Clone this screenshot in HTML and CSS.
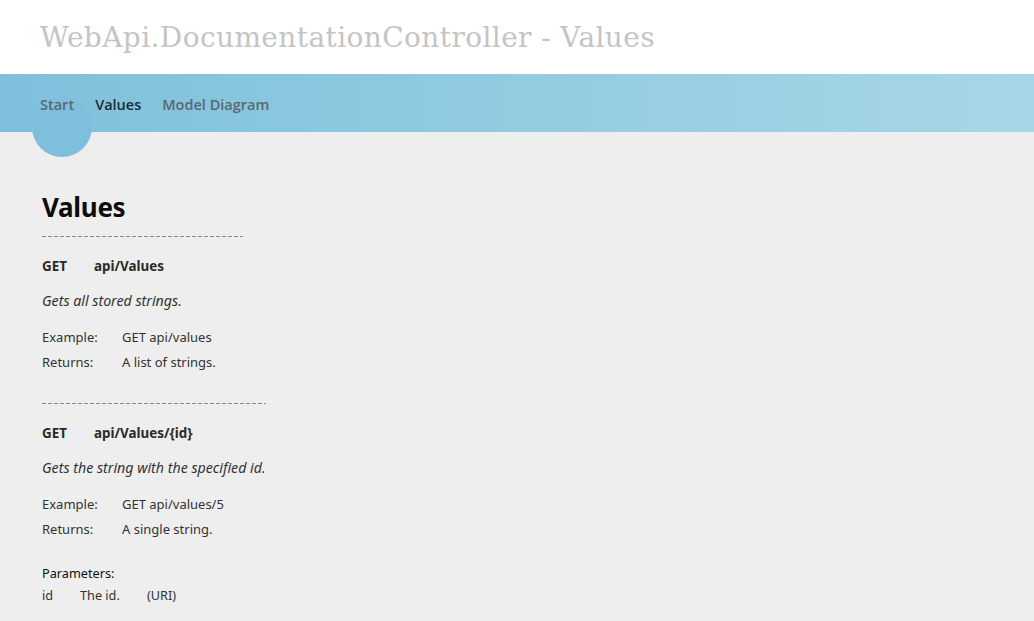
FILE: index.html
```
<!DOCTYPE html>
<html>
<head>
<meta charset="utf-8">
<title>WebApi.DocumentationController - Values</title>
<link rel="stylesheet" href="styles.css">
</head>
<body>
<header class="top">
  <h1 class="site-title">WebApi.DocumentationController - Values</h1>
</header>
<nav class="nav">
  <a class="nav-item">Start</a>
  <a class="nav-item active">Values</a>
  <a class="nav-item">Model Diagram</a>
  <span class="nav-bubble"></span>
</nav>
<main class="content">
  <h2 class="page-title">Values</h2>
  <section class="endpoint">
    <div class="sep sep-a"></div>
    <div class="route"><span class="verb">GET</span><span class="path">api/Values</span></div>
    <p class="desc">Gets all stored strings.</p>
    <div class="kv"><span class="k">Example:</span><span class="v">GET api/values</span></div>
    <div class="kv"><span class="k">Returns:</span><span class="v">A list of strings.</span></div>
  </section>
  <section class="endpoint second">
    <div class="sep sep-b"></div>
    <div class="route"><span class="verb">GET</span><span class="path">api/Values/{id}</span></div>
    <p class="desc">Gets the string with the specified id.</p>
    <div class="kv"><span class="k">Example:</span><span class="v">GET api/values/5</span></div>
    <div class="kv"><span class="k">Returns:</span><span class="v">A single string.</span></div>
    <div class="params">
      <div class="params-title">Parameters:</div>
      <div class="param"><span class="p-name">id</span><span class="p-desc">The id.</span><span class="p-src">(URI)</span></div>
    </div>
  </section>
</main>
</body>
</html>
```
FILE: styles.css
```
html, body { margin: 0; padding: 0; }
body {
  background: #eeeeee;
  font-family: "Noto Sans", "Open Sans", sans-serif;
  color: #333;
  width: 1034px;
  height: 621px;
  overflow: hidden;
}
.top {
  background: #fff;
  height: 74px;
  box-sizing: border-box;
  padding: 21px 0 0 40px;
}
.site-title {
  margin: 0;
  font-family: "DejaVu Serif", serif;
  font-weight: normal;
  font-size: 28px;
  line-height: 34px;
  color: #c4c4c4;
  letter-spacing: 0.4px;
}
.nav {
  position: relative;
  height: 58px;
  background: linear-gradient(to right, #7ec0dc 0%, #93cbe1 50%, #a7d6e7 100%);
  display: flex;
  align-items: center;
  padding-left: 40px;
  gap: 21px;
  box-sizing: border-box;
  padding-top: 2px;
}
.nav-item {
  font-family: "Open Sans", sans-serif;
  font-weight: 600;
  font-size: 14.5px;
  color: #5a6770;
  position: relative;
  z-index: 1;
}
.nav-item.active { color: #1f2a33; }
.nav-bubble {
  position: absolute;
  left: 32px;
  top: 23px;
  width: 60px;
  height: 60px;
  border-radius: 50%;
  background: #7ec0dc;
}
.content {
  padding: 57px 0 0 42px;
}
.page-title {
  margin: 0;
  font-family: "Noto Sans", sans-serif;
  font-weight: bold;
  font-size: 26px;
  line-height: 36px;
  color: #0d0d0d;
  letter-spacing: -0.3px;
}
.sep {
  height: 1px;
  background: repeating-linear-gradient(to right, #8a8a8a 0 4px, transparent 4px 6px);
}
.sep-a { width: 201px; margin-top: 11px; }
.sep-b { width: 224px; }
.second { margin-top: 32px; }
.route {
  display: flex;
  font-weight: bold;
  font-size: 13.4px;
  color: #2a2a2a;
  margin-top: 20px;
  line-height: 18px;
}
.verb { width: 52px; }
.desc {
  margin: 17px 0 0 0;
  font-style: italic;
  font-size: 14.2px;
  line-height: 18px;
  color: #333;
}
.kv {
  display: flex;
  font-size: 13px;
  line-height: 18px;
  color: #333;
}
.desc + .kv { margin-top: 18px; }
.kv + .kv { margin-top: 7px; }
.k { width: 80px; }
.params { margin-top: 26px; font-size: 12.7px; line-height: 18px; color: #111; }
.param { display: flex; color: #333; margin-top: 4px; }
.p-name { width: 38px; }
.p-desc { width: 67px; }
```
